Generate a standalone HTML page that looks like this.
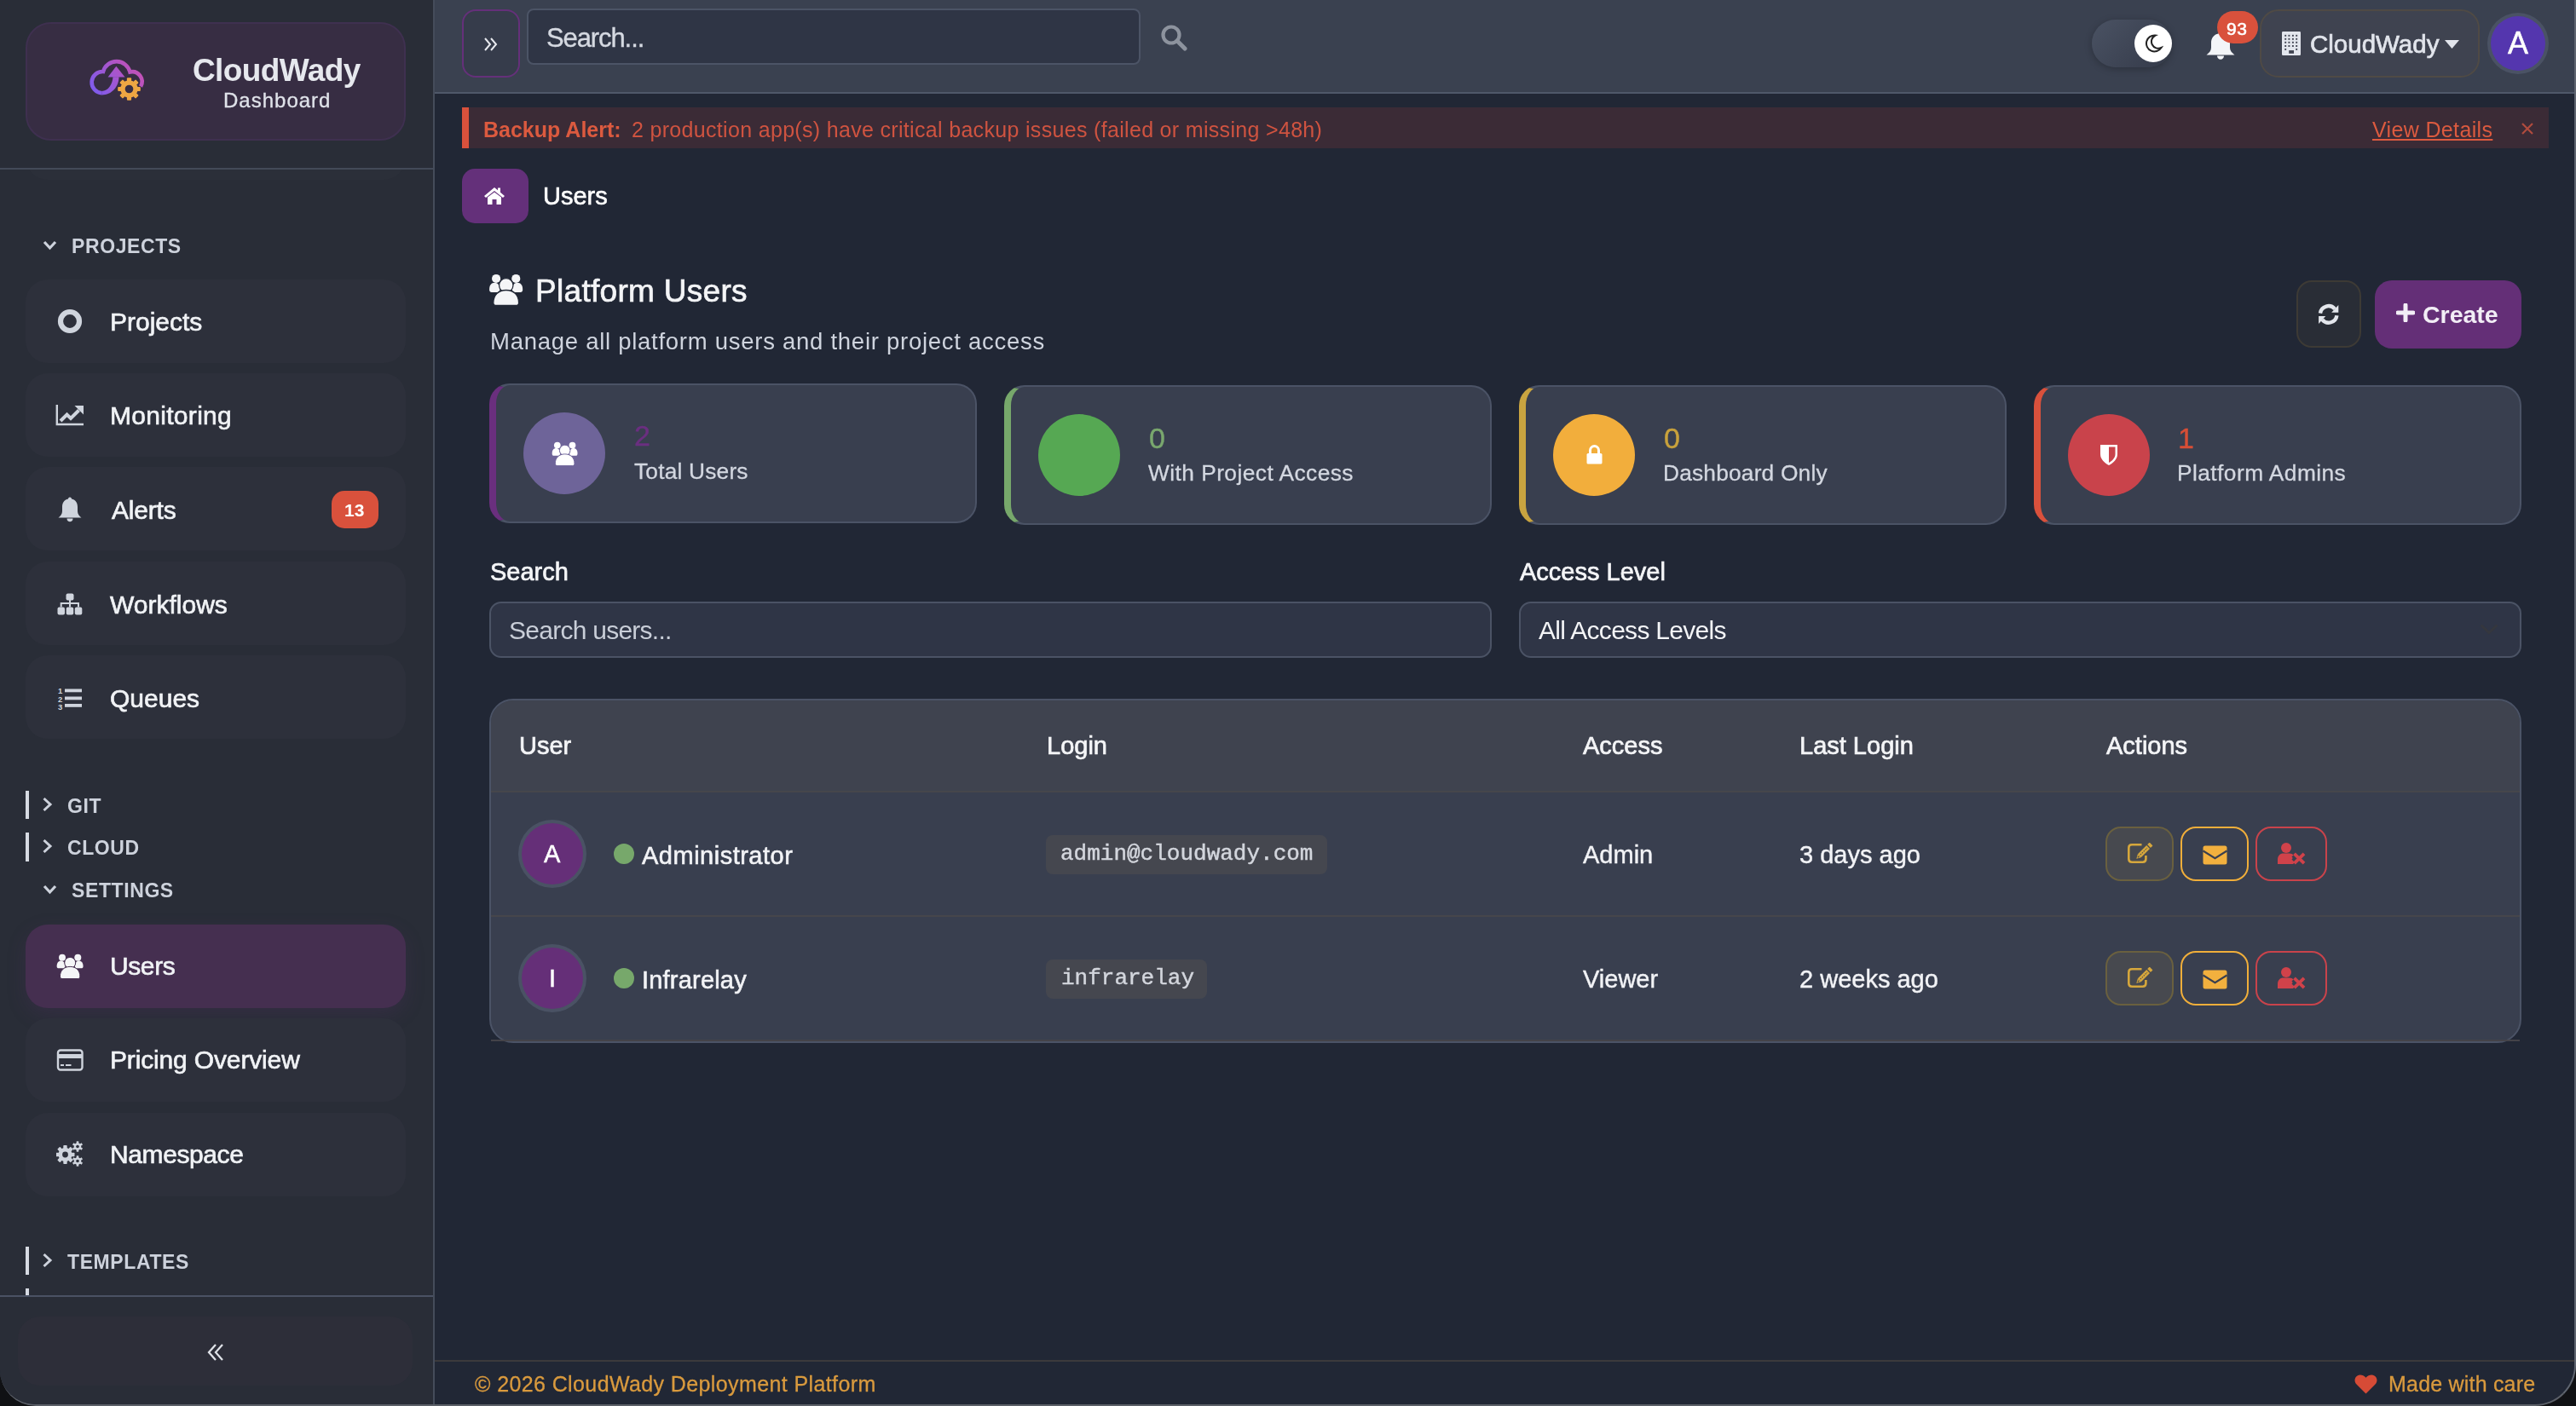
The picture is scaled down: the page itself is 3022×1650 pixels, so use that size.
<!DOCTYPE html>
<html><head><meta charset="utf-8"><title>CloudWady Users</title>
<style>
html,body{margin:0;padding:0;width:3022px;height:1650px;overflow:hidden;background:#101114;font-family:"Liberation Sans",sans-serif;}
.a{position:absolute;box-sizing:border-box;}
.t{position:absolute;white-space:nowrap;line-height:1;will-change:transform;}
.win{position:absolute;left:0;top:0;width:3022px;height:1650px;overflow:hidden;border-radius:0 0 48px 42px;background:#212735;border-right:2px solid #5f6570;border-bottom:2px solid #5c6068;box-sizing:border-box;}
.sb{left:0;top:0;width:510px;height:1649px;background:#292d37;border-right:2px solid #454c5a;}
.mi{position:absolute;left:30px;width:446px;height:98px;border-radius:26px;background:#2d303b;}
.mt{will-change:transform;position:absolute;left:129px;font-size:30px;color:#f1f3f6;line-height:1;white-space:nowrap;-webkit-text-stroke:0.65px #f1f3f6;}
.sec{will-change:transform;position:absolute;font-size:23px;font-weight:bold;letter-spacing:0.6px;color:#cdd2dc;line-height:1;white-space:nowrap;}
.ic{position:absolute;}
</style></head><body>
<div class="win">

<!-- ============ SIDEBAR ============ -->
<div class="a sb"></div>
<div class="mi" style="top:113px;background:#2b2f39"></div>
<div class="a" style="left:0;top:0;width:508px;height:198px;background:#292d37;"></div>
<!-- logo box -->
<div class="a" style="left:30px;top:26px;width:446px;height:139px;border-radius:30px;background:#372d43;border:2px solid #3f3050;"></div>
<svg class="ic" style="left:95px;top:55px" width="90" height="70" viewBox="0 0 90 70">
 <defs><linearGradient id="lg" gradientUnits="userSpaceOnUse" x1="14" y1="58" x2="68" y2="16"><stop offset="0" stop-color="#7a5cf0"/><stop offset="1" stop-color="#cc50b0"/></linearGradient></defs>
 <path d="M70 46.5 A11.5 11.5 0 0 0 57.5 29.5 A16.3 16.3 0 0 0 26 29 A12.6 12.6 0 1 0 24.5 54.2" fill="none" stroke="url(#lg)" stroke-width="4.6" stroke-linecap="butt"/>
 <path d="M24.3 56.5 C36 56.5 44.5 47 44.5 35.3 L37.5 35.3 C37 44 32 51.9 24.3 51.9 Z" fill="url(#lg)"/>
 <path d="M41.3 22.8 L31.6 35.6 L51.6 35.6 Z" fill="url(#lg)"/>
 <g transform="translate(56.5 49.5)" fill="#eea643">
  <circle r="10.2"/>
  <rect x="-2.6" y="-13.3" width="5.2" height="6" rx="1"/>
  <rect x="-2.6" y="-13.3" width="5.2" height="6" rx="1" transform="rotate(45)"/>
  <rect x="-2.6" y="-13.3" width="5.2" height="6" rx="1" transform="rotate(90)"/>
  <rect x="-2.6" y="-13.3" width="5.2" height="6" rx="1" transform="rotate(135)"/>
  <rect x="-2.6" y="-13.3" width="5.2" height="6" rx="1" transform="rotate(180)"/>
  <rect x="-2.6" y="-13.3" width="5.2" height="6" rx="1" transform="rotate(225)"/>
  <rect x="-2.6" y="-13.3" width="5.2" height="6" rx="1" transform="rotate(270)"/>
  <rect x="-2.6" y="-13.3" width="5.2" height="6" rx="1" transform="rotate(315)"/>
  <circle r="4.8" fill="#372d43"/>
 </g>
</svg>
<div class="t" style="left:226px;top:64px;font-size:37px;font-weight:bold;letter-spacing:-0.6px;color:#e6e8ee;">CloudWady</div>
<div class="t" style="left:262px;top:106px;font-size:24px;letter-spacing:1px;-webkit-text-stroke:0.3px #e0e3ea;color:#e0e3ea;">Dashboard</div>
<div class="a" style="left:0;top:197px;width:508px;height:2px;background:#434a58;"></div>

<!-- PROJECTS section -->
<svg class="ic" style="left:50px;top:282px" width="17" height="12" viewBox="0 0 17 12"><path d="M2 2 L8.5 9 L15 2" fill="none" stroke="#cdd2dc" stroke-width="3.2"/></svg>
<div class="sec" style="left:84px;top:278px;">PROJECTS</div>

<div class="mi" style="top:328px"></div>
<svg class="ic" style="left:66px;top:361px" width="32" height="32" viewBox="0 0 32 32"><circle cx="16" cy="16" r="11" fill="none" stroke="#cfd4dd" stroke-width="6.2"/></svg>
<div class="mt" style="top:363px">Projects</div>

<div class="mi" style="top:438px"></div>
<svg class="ic" style="left:65px;top:474px" width="34" height="26" viewBox="0 0 34 26"><path d="M1.8 1 V24 H33" fill="none" stroke="#cfd4dd" stroke-width="2.4"/><path d="M6 20 L13.5 12.5 L18 17 L27.5 7.5" fill="none" stroke="#cfd4dd" stroke-width="4"/><path d="M22.5 2 H33 V12.5 Z" fill="#cfd4dd"/></svg>
<div class="mt" style="top:473px;letter-spacing:0.3px">Monitoring</div>

<div class="mi" style="top:548px"></div>
<svg class="ic" style="left:68px;top:583px" width="28" height="30" viewBox="0 0 28 30"><path d="M14 0.5 C15.3 0.5 16 1.5 16 2.6 C21 3.6 23 7.5 23 12 V17 C23 20 25 22.5 27.5 24.5 H0.5 C3 22.5 5 20 5 17 V12 C5 7.5 7 3.6 12 2.6 C12 1.5 12.7 0.5 14 0.5 Z" fill="#cfd4dd"/><path d="M10.5 25.5 C10.5 28 12 29.3 14 29.3 C16 29.3 17.5 28 17.5 25.5 Z" fill="#cfd4dd"/></svg>
<div class="mt" style="top:584px;left:131px;letter-spacing:-0.2px">Alerts</div>
<div class="a" style="left:389px;top:576px;width:55px;height:44px;border-radius:15px;background:#d9513c;"></div>
<div class="t" style="left:404px;top:588px;font-size:21px;font-weight:bold;color:#fff;">13</div>

<div class="mi" style="top:659px"></div>
<svg class="ic" style="left:67px;top:696px" width="30" height="26" viewBox="0 0 30 26"><rect x="10.5" y="0.5" width="9" height="8" rx="2" fill="#cfd4dd"/><rect x="0.5" y="16.5" width="8.5" height="9" rx="2" fill="#cfd4dd"/><rect x="10.7" y="16.5" width="8.5" height="9" rx="2" fill="#cfd4dd"/><rect x="20.8" y="16.5" width="8.5" height="9" rx="2" fill="#cfd4dd"/><path d="M15 8 V16.5 M4.7 16.5 V12 H25 V16.5" fill="none" stroke="#cfd4dd" stroke-width="2"/></svg>
<div class="mt" style="top:695px">Workflows</div>

<div class="mi" style="top:769px"></div>
<svg class="ic" style="left:67px;top:804px" width="30" height="30" viewBox="0 0 30 30"><text x="1" y="10" font-family="Liberation Sans" font-weight="bold" font-size="9.5" fill="#cfd4dd">1</text><text x="1" y="19.5" font-family="Liberation Sans" font-weight="bold" font-size="9.5" fill="#cfd4dd">2</text><text x="1" y="29" font-family="Liberation Sans" font-weight="bold" font-size="9.5" fill="#cfd4dd">3</text><rect x="9" y="4.5" width="20" height="3.8" fill="#cfd4dd"/><rect x="9" y="13.5" width="20" height="3.8" fill="#cfd4dd"/><rect x="9" y="22" width="20" height="3.8" fill="#cfd4dd"/></svg>
<div class="mt" style="top:805px">Queues</div>

<!-- GIT / CLOUD -->
<div class="a" style="left:30px;top:928px;width:4px;height:33px;background:#d6dae2;"></div>
<svg class="ic" style="left:49px;top:935px" width="13" height="18" viewBox="0 0 13 18"><path d="M2.5 2 L10 9 L2.5 16" fill="none" stroke="#cdd2dc" stroke-width="3"/></svg>
<div class="sec" style="left:79px;top:935px;">GIT</div>
<div class="a" style="left:30px;top:977px;width:4px;height:34px;background:#d6dae2;"></div>
<svg class="ic" style="left:49px;top:984px" width="13" height="18" viewBox="0 0 13 18"><path d="M2.5 2 L10 9 L2.5 16" fill="none" stroke="#cdd2dc" stroke-width="3"/></svg>
<div class="sec" style="left:79px;top:984px;">CLOUD</div>

<!-- SETTINGS -->
<svg class="ic" style="left:50px;top:1038px" width="17" height="12" viewBox="0 0 17 12"><path d="M2 2 L8.5 9 L15 2" fill="none" stroke="#cdd2dc" stroke-width="3.2"/></svg>
<div class="sec" style="left:84px;top:1034px;">SETTINGS</div>

<div class="mi" style="top:1085px;background:#452f50;box-shadow:0 8px 22px rgba(90,50,110,0.22);"></div>
<svg class="ic" style="left:66px;top:1119px" width="32" height="30" viewBox="0 0 32 30"><g fill="#f4f5f7"><circle cx="7" cy="4.7" r="4"/><circle cx="25.3" cy="4.7" r="4"/><path d="M0.7 14.2 C0.7 10.6 2.8 8.4 5.5 8.4 C8.2 8.4 10.3 10.6 10.3 14.2 V15.2 C10.3 16.5 9.5 17.3 8.2 17.3 H2.8 C1.5 17.3 0.7 16.5 0.7 15.2 Z"/><path d="M21.9 14.2 C21.9 10.6 24 8.4 26.7 8.4 C29.4 8.4 31.5 10.6 31.5 14.2 V15.2 C31.5 16.5 30.7 17.3 29.4 17.3 H24 C22.7 17.3 21.9 16.5 21.9 15.2 Z"/></g><g fill="#f4f5f7" stroke="#452f50" stroke-width="1"><circle cx="16.2" cy="10.9" r="6.5"/><path d="M4.4 27 C4.4 20 9 15.4 16.2 15.4 C23.4 15.4 27.9 20 27.9 27 C27.9 28.6 26.8 29.6 25.2 29.6 H7.1 C5.5 29.6 4.4 28.6 4.4 27 Z"/></g></svg>
<div class="mt" style="top:1119px;letter-spacing:-0.4px">Users</div>

<div class="mi" style="top:1195px"></div>
<svg class="ic" style="left:66px;top:1231px" width="32" height="26" viewBox="0 0 32 26"><rect x="2" y="1.5" width="28.5" height="23" rx="3" fill="none" stroke="#cfd4dd" stroke-width="2.4"/><rect x="2" y="6" width="28.5" height="5" fill="#cfd4dd"/><rect x="5" y="18" width="4" height="2" fill="#cfd4dd"/><rect x="11" y="18" width="6.5" height="2" fill="#cfd4dd"/></svg>
<div class="mt" style="top:1229px;letter-spacing:-0.15px">Pricing Overview</div>

<div class="mi" style="top:1306px"></div>
<svg class="ic" style="left:66px;top:1339px" width="32" height="30" viewBox="0 0 32 30" fill="#cfd4dd">
 <g transform="translate(10.5 16)"><circle r="8"/><g><rect x="-2.2" y="-11" width="4.4" height="5" rx="0.8"/><rect x="-2.2" y="-11" width="4.4" height="5" rx="0.8" transform="rotate(45)"/><rect x="-2.2" y="-11" width="4.4" height="5" rx="0.8" transform="rotate(90)"/><rect x="-2.2" y="-11" width="4.4" height="5" rx="0.8" transform="rotate(135)"/><rect x="-2.2" y="-11" width="4.4" height="5" rx="0.8" transform="rotate(180)"/><rect x="-2.2" y="-11" width="4.4" height="5" rx="0.8" transform="rotate(225)"/><rect x="-2.2" y="-11" width="4.4" height="5" rx="0.8" transform="rotate(270)"/><rect x="-2.2" y="-11" width="4.4" height="5" rx="0.8" transform="rotate(315)"/></g><circle r="3.4" fill="#2d303b"/></g>
 <g transform="translate(25 6.5)"><circle r="4.2"/><rect x="-1.3" y="-6.2" width="2.6" height="12.4"/><rect x="-1.3" y="-6.2" width="2.6" height="12.4" transform="rotate(60)"/><rect x="-1.3" y="-6.2" width="2.6" height="12.4" transform="rotate(120)"/><circle r="1.8" fill="#2d303b"/></g>
 <g transform="translate(25 23.5)"><circle r="4.2"/><rect x="-1.3" y="-6.2" width="2.6" height="12.4"/><rect x="-1.3" y="-6.2" width="2.6" height="12.4" transform="rotate(60)"/><rect x="-1.3" y="-6.2" width="2.6" height="12.4" transform="rotate(120)"/><circle r="1.8" fill="#2d303b"/></g>
</svg>
<div class="mt" style="top:1340px;letter-spacing:-0.4px">Namespace</div>

<!-- TEMPLATES -->
<div class="a" style="left:30px;top:1463px;width:4px;height:33px;background:#d6dae2;"></div>
<svg class="ic" style="left:49px;top:1470px" width="13" height="18" viewBox="0 0 13 18"><path d="M2.5 2 L10 9 L2.5 16" fill="none" stroke="#cdd2dc" stroke-width="3"/></svg>
<div class="sec" style="left:79px;top:1470px;">TEMPLATES</div>
<div class="a" style="left:30px;top:1512px;width:4px;height:9px;background:#d6dae2;"></div>

<!-- bottom collapse -->
<div class="a" style="left:0;top:1520px;width:508px;height:2px;background:#4a5264;"></div>

<div class="a" style="left:21px;top:1545px;width:463px;height:81px;border-radius:26px;background:#2d2e39;"></div>
<svg class="ic" style="left:242px;top:1576px" width="22" height="22" viewBox="0 0 22 22"><path d="M11 2 L3 11 L11 20 M19 2 L11 11 L19 20" fill="none" stroke="#dfe2e8" stroke-width="2.3"/></svg>

<!-- ============ TOPBAR ============ -->
<div class="a" style="left:510px;top:0;width:2512px;height:108px;background:#3a4150;"></div>
<div class="a" style="left:510px;top:108px;width:2512px;height:2px;background:#4f5869;"></div>
<div class="a" style="left:542px;top:11px;width:68px;height:80px;border-radius:16px;border:2px solid #65307a;background:#363c4b;"></div>
<svg class="ic" style="left:567px;top:43px" width="18" height="18" viewBox="0 0 18 18"><path d="M2 2 L8 9 L2 16 M9 2 L15 9 L9 16" fill="none" stroke="#e8eaef" stroke-width="2"/></svg>
<div class="a" style="left:618px;top:10px;width:720px;height:66px;border-radius:8px;border:2px solid #4c5466;background:#2f3545;"></div>
<div class="t" style="left:641px;top:29px;font-size:31px;letter-spacing:-1.1px;color:#d5d9e1;-webkit-text-stroke:0.35px #d5d9e1;">Search...</div>
<svg class="ic" style="left:1361px;top:28px" width="34" height="32" viewBox="0 0 34 32"><circle cx="13" cy="13" r="9.5" fill="none" stroke="#8d939e" stroke-width="4.2"/><path d="M20 20 L29 29" stroke="#8d939e" stroke-width="5" stroke-linecap="round"/></svg>

<!-- theme toggle -->
<div class="a" style="left:2454px;top:23px;width:94px;height:56px;border-radius:28px;background:linear-gradient(135deg,#4a5263,#343a49);box-shadow:0 2px 8px rgba(0,0,0,0.25);"></div>
<div class="a" style="left:2504px;top:28.5px;width:44px;height:44px;border-radius:22px;background:#fff;"></div>
<svg class="ic" style="left:2514px;top:39px" width="24" height="24" viewBox="0 0 24 24"><path d="M14.5 2.5 A9.5 9.5 0 1 0 21.5 17 A8 8 0 0 1 14.5 2.5 Z" fill="none" stroke="#222" stroke-width="2"/></svg>
<!-- bell -->
<svg class="ic" style="left:2588px;top:35px" width="36" height="36" viewBox="0 0 36 36"><path d="M17 2 C18.5 2 19.5 3.2 19.5 4.5 C25 5.5 28 10 28 15 V21 C28 24.5 30.5 27 33.5 29.5 H0.5 C3.5 27 6 24.5 6 21 V15 C6 10 9 5.5 14.5 4.5 C14.5 3.2 15.5 2 17 2 Z" fill="#f3f5f8"/><path d="M13 30.5 C13 33 14.8 34.8 17 34.8 C19.2 34.8 21 33 21 30.5 Z" fill="#f3f5f8"/></svg>
<div class="a" style="left:2601px;top:12.5px;width:48px;height:38.5px;border-radius:19px;background:#d9513c;"></div>
<div class="t" style="left:2612px;top:23px;font-size:21px;letter-spacing:0.6px;-webkit-text-stroke:0.6px #fff;color:#fff;">93</div>
<!-- org -->
<div class="a" style="left:2651px;top:11px;width:258px;height:80px;border-radius:22px;border:2px solid #4f4a45;background:#3f4350;"></div>
<svg class="ic" style="left:2677px;top:37px" width="22" height="28" viewBox="0 0 22 28"><rect x="0" y="0" width="22" height="28" rx="1.2" fill="#e3e6ed"/><g fill="#3f4350"><rect x="3.25" y="3.85" width="1.9" height="1.9"/><rect x="3.25" y="7.85" width="1.9" height="1.9"/><rect x="3.25" y="11.85" width="1.9" height="1.9"/><rect x="3.25" y="16.05" width="1.9" height="1.9"/><rect x="7.45" y="3.85" width="1.9" height="1.9"/><rect x="7.45" y="7.85" width="1.9" height="1.9"/><rect x="7.45" y="11.85" width="1.9" height="1.9"/><rect x="7.45" y="16.05" width="1.9" height="1.9"/><rect x="11.95" y="3.85" width="1.9" height="1.9"/><rect x="11.95" y="7.85" width="1.9" height="1.9"/><rect x="11.95" y="11.85" width="1.9" height="1.9"/><rect x="11.95" y="16.05" width="1.9" height="1.9"/><rect x="16.25" y="3.85" width="1.9" height="1.9"/><rect x="16.25" y="7.85" width="1.9" height="1.9"/><rect x="16.25" y="11.85" width="1.9" height="1.9"/><rect x="16.25" y="16.05" width="1.9" height="1.9"/><rect x="3.25" y="19.95" width="1.9" height="1.9"/><rect x="16.25" y="19.95" width="1.9" height="1.9"/><rect x="8.2" y="22.1" width="5.8" height="3.7"/></g></svg>
<div class="t" style="left:2710px;top:37px;font-size:29.5px;color:#e2e5ec;-webkit-text-stroke:0.7px #e2e5ec;">CloudWady</div>
<svg class="ic" style="left:2868px;top:47px" width="17" height="11" viewBox="0 0 17 11"><path d="M0 0 H17 L8.5 10 Z" fill="#e2e5ec"/></svg>
<!-- avatar -->
<div class="a" style="left:2918px;top:15px;width:72px;height:72px;border-radius:36px;background:#4a5264;"></div>
<div class="a" style="left:2922px;top:19px;width:64px;height:64px;border-radius:32px;background:#5436ae;"></div>
<div class="t" style="left:2942px;top:33px;font-size:36px;color:#fff;-webkit-text-stroke:0.5px #fff;">A</div>

<!-- ============ ALERT ============ -->
<div class="a" style="left:542px;top:126px;width:2448px;height:48px;background:#3b2b36;"></div>
<div class="a" style="left:542px;top:126px;width:8px;height:48px;background:#d9513c;"></div>
<div class="t" style="left:567px;top:140px;font-size:25px;font-weight:bold;color:#dc5a3f;">Backup Alert:</div>
<div class="t" style="left:741px;top:140px;font-size:25px;letter-spacing:0.32px;color:#cf5340;">2 production app(s) have critical backup issues (failed or missing &gt;48h)</div>
<div class="t" style="left:2783px;top:140px;font-size:25px;letter-spacing:0.35px;color:#dc5a3f;text-decoration:underline;">View Details</div>
<svg class="ic" style="left:2957px;top:143px" width="16" height="16" viewBox="0 0 16 16"><path d="M2 2 L14 14 M14 2 L2 14" stroke="#b04b3e" stroke-width="2.2"/></svg>

<!-- breadcrumb -->
<div class="a" style="left:542px;top:198px;width:78px;height:64px;border-radius:15px;background:#64307a;"></div>
<svg class="ic" style="left:567px;top:219px" width="26" height="22" viewBox="0 0 26 22"><path d="M13 1 L1 11 L3 13 L13 5 L23 13 L25 11 L20 6.8 V1.5 H17 V4.2 Z" fill="#fff"/><path d="M5 12.5 L13 6.5 L21 12.5 V21 H15.5 V15 H10.5 V21 H5 Z" fill="#fff"/></svg>
<div class="t" style="left:637px;top:216px;font-size:29px;color:#fff;-webkit-text-stroke:0.6px #fff;">Users</div>

<!-- ============ PAGE HEADER ============ -->
<svg class="ic" style="left:573px;top:321px" width="41" height="38" viewBox="0 0 32 30"><g fill="#f4f5f7"><circle cx="7" cy="4.7" r="4"/><circle cx="25.3" cy="4.7" r="4"/><path d="M0.7 14.2 C0.7 10.6 2.8 8.4 5.5 8.4 C8.2 8.4 10.3 10.6 10.3 14.2 V15.2 C10.3 16.5 9.5 17.3 8.2 17.3 H2.8 C1.5 17.3 0.7 16.5 0.7 15.2 Z"/><path d="M21.9 14.2 C21.9 10.6 24 8.4 26.7 8.4 C29.4 8.4 31.5 10.6 31.5 14.2 V15.2 C31.5 16.5 30.7 17.3 29.4 17.3 H24 C22.7 17.3 21.9 16.5 21.9 15.2 Z"/></g><g fill="#f4f5f7" stroke="#212735" stroke-width="1"><circle cx="16.2" cy="10.9" r="6.5"/><path d="M4.4 27 C4.4 20 9 15.4 16.2 15.4 C23.4 15.4 27.9 20 27.9 27 C27.9 28.6 26.8 29.6 25.2 29.6 H7.1 C5.5 29.6 4.4 28.6 4.4 27 Z"/></g></svg>
<div class="t" style="left:628px;top:323px;font-size:37px;letter-spacing:0.3px;color:#f4f5f7;-webkit-text-stroke:0.7px #f4f5f7;">Platform Users</div>
<div class="t" style="left:575px;top:387px;font-size:27.5px;letter-spacing:0.73px;color:#cfd4de;">Manage all platform users and their project access</div>

<div class="a" style="left:2694px;top:329px;width:76px;height:79px;border-radius:18px;background:#292d36;border:2px solid #3d3a35;"></div>
<svg class="ic" style="left:2717px;top:354px" width="29" height="29" viewBox="0 0 29 29"><path d="M5 13.6 A9.7 9.7 0 0 1 22.1 8.7" fill="none" stroke="#e3e6ec" stroke-width="4.4"/><path d="M26.3 3.9 V12.7 H18.1 Z" fill="#e3e6ec"/><path d="M24.4 16.2 A9.7 9.7 0 0 1 7.3 21.1" fill="none" stroke="#e3e6ec" stroke-width="4.4"/><path d="M3.1 25.9 V17.1 H11.3 Z" fill="#e3e6ec"/></svg>
<div class="a" style="left:2786px;top:329px;width:172px;height:80px;border-radius:20px;background:#642f77;"></div>
<svg class="ic" style="left:2811px;top:356px" width="22" height="22" viewBox="0 0 22 22"><path d="M11 2 V20 M2 11 H20" stroke="#f2eef6" stroke-width="5" stroke-linecap="round"/></svg>
<div class="t" style="left:2842px;top:355px;font-size:28.5px;font-weight:bold;color:#f2eef6;">Create</div>

<!-- ============ STAT CARDS ============ -->
<!-- card1 -->
<div class="a" style="left:574px;top:450px;width:572px;height:164px;border-radius:24px;background:#393f4f;border:2px solid #4b5366;border-left:8px solid #6a2f7e;"></div>
<div class="a" style="left:614px;top:484px;width:96px;height:96px;border-radius:48px;background:#6e6499;"></div>
<svg class="ic" style="left:647px;top:518px" width="31" height="29" viewBox="0 0 32 30"><g fill="#fff"><circle cx="7" cy="4.7" r="4"/><circle cx="25.3" cy="4.7" r="4"/><path d="M0.7 14.2 C0.7 10.6 2.8 8.4 5.5 8.4 C8.2 8.4 10.3 10.6 10.3 14.2 V15.2 C10.3 16.5 9.5 17.3 8.2 17.3 H2.8 C1.5 17.3 0.7 16.5 0.7 15.2 Z"/><path d="M21.9 14.2 C21.9 10.6 24 8.4 26.7 8.4 C29.4 8.4 31.5 10.6 31.5 14.2 V15.2 C31.5 16.5 30.7 17.3 29.4 17.3 H24 C22.7 17.3 21.9 16.5 21.9 15.2 Z"/></g><g fill="#fff" stroke="#6e6499" stroke-width="1"><circle cx="16.2" cy="10.9" r="6.5"/><path d="M4.4 27 C4.4 20 9 15.4 16.2 15.4 C23.4 15.4 27.9 20 27.9 27 C27.9 28.6 26.8 29.6 25.2 29.6 H7.1 C5.5 29.6 4.4 28.6 4.4 27 Z"/></g></svg>
<div class="t" style="left:744px;top:494px;font-size:34px;color:#6b2f80;-webkit-text-stroke:0.4px #6b2f80;">2</div>
<div class="t" style="left:744px;top:540px;font-size:26.3px;letter-spacing:0.2px;color:#d3d7e0;-webkit-text-stroke:0.3px #d3d7e0;">Total Users</div>
<!-- card2 -->
<div class="a" style="left:1178px;top:452px;width:572px;height:164px;border-radius:24px;background:#393f4f;border:2px solid #4b5366;border-left:8px solid #77a86b;"></div>
<div class="a" style="left:1218px;top:486px;width:96px;height:96px;border-radius:48px;background:#56a853;"></div>
<div class="t" style="left:1348px;top:497px;font-size:34px;color:#7aa86e;-webkit-text-stroke:0.4px #7aa86e;">0</div>
<div class="t" style="left:1347px;top:542px;font-size:26.3px;letter-spacing:0.45px;color:#d3d7e0;-webkit-text-stroke:0.3px #d3d7e0;">With Project Access</div>
<!-- card3 -->
<div class="a" style="left:1782px;top:452px;width:572px;height:164px;border-radius:24px;background:#393f4f;border:2px solid #4b5366;border-left:8px solid #c9a440;"></div>
<div class="a" style="left:1822px;top:486px;width:96px;height:96px;border-radius:48px;background:#f2ae3c;"></div>
<svg class="ic" style="left:1860.7px;top:522px" width="19" height="23" viewBox="0 0 19 23"><path d="M4.5 10 V6.5 A5 5 0 0 1 14.5 6.5 V10" fill="none" stroke="#fff" stroke-width="3"/><rect x="0.5" y="10" width="18" height="12.5" rx="1.5" fill="#fff"/></svg>
<div class="t" style="left:1952px;top:497px;font-size:34px;color:#c9a23c;-webkit-text-stroke:0.4px #c9a23c;">0</div>
<div class="t" style="left:1951px;top:542px;font-size:26.3px;letter-spacing:0.2px;color:#d3d7e0;-webkit-text-stroke:0.3px #d3d7e0;">Dashboard Only</div>
<!-- card4 -->
<div class="a" style="left:2386px;top:452px;width:572px;height:164px;border-radius:24px;background:#393f4f;border:2px solid #4b5366;border-left:8px solid #d9513c;"></div>
<div class="a" style="left:2426px;top:486px;width:96px;height:96px;border-radius:48px;background:#c9434b;"></div>
<svg class="ic" style="left:2463px;top:521px" width="22" height="26" viewBox="0 0 22 26"><path d="M1 1 H21 V12 C21 18 16 22.5 11 25 C6 22.5 1 18 1 12 Z" fill="#fff"/><path d="M11 3.5 V22 C14.5 20 18.5 16.5 18.5 12 V3.5 Z" fill="#c9434b"/></svg>
<div class="t" style="left:2555px;top:497px;font-size:34px;color:#d84e36;-webkit-text-stroke:0.4px #d84e36;">1</div>
<div class="t" style="left:2554px;top:542px;font-size:26.3px;letter-spacing:0.45px;color:#d3d7e0;-webkit-text-stroke:0.3px #d3d7e0;">Platform Admins</div>

<!-- ============ FILTERS ============ -->
<div class="t" style="left:575px;top:657px;font-size:29px;-webkit-text-stroke:0.7px #f4f5f7;color:#f4f5f7;">Search</div>
<div class="a" style="left:574px;top:706px;width:1175.5px;height:66px;border-radius:14px;background:#2f3546;border:2px solid #4b5365;"></div>
<div class="t" style="left:597px;top:725px;font-size:30px;letter-spacing:-0.74px;color:#c9ced8;">Search users...</div>
<div class="t" style="left:1783px;top:657px;font-size:29px;-webkit-text-stroke:0.7px #f4f5f7;color:#f4f5f7;">Access Level</div>
<div class="a" style="left:1782px;top:706px;width:1176px;height:66px;border-radius:14px;background:#2f3546;border:2px solid #4b5365;"></div>
<div class="t" style="left:1805px;top:725px;font-size:30px;letter-spacing:-0.7px;color:#f4f5f7;">All Access Levels</div>
<svg class="ic" style="left:2909px;top:732px" width="22" height="14" viewBox="0 0 22 14"><path d="M2.5 2.5 L11 10.5 L19.5 2.5" fill="none" stroke="#35373e" stroke-width="3" stroke-linecap="round"/></svg>

<!-- ============ TABLE ============ -->
<div class="a" style="left:574px;top:820px;width:2384px;height:404px;border-radius:28px;background:#393f4f;border:2px solid #4b5366;overflow:hidden;">
  <div class="a" style="left:0;top:0;width:2384px;height:106px;background:#3f434f;"></div>
  <div class="a" style="left:0;top:106px;width:2384px;height:2px;background:#46464b;"></div>
  <div class="a" style="left:0;top:252px;width:2384px;height:2px;background:#46464b;"></div>
</div>
<div class="a" style="left:576px;top:1220px;width:2380px;height:2px;background:#444349;"></div>
<div class="t" style="left:609px;top:861px;font-size:29px;-webkit-text-stroke:0.7px #f4f5f7;color:#f4f5f7;">User</div>
<div class="t" style="left:1228px;top:861px;font-size:29px;-webkit-text-stroke:0.7px #f4f5f7;color:#f4f5f7;">Login</div>
<div class="t" style="left:1857px;top:861px;font-size:29px;-webkit-text-stroke:0.7px #f4f5f7;color:#f4f5f7;">Access</div>
<div class="t" style="left:2111px;top:861px;font-size:29px;-webkit-text-stroke:0.7px #f4f5f7;color:#f4f5f7;">Last Login</div>
<div class="t" style="left:2471px;top:861px;font-size:29px;-webkit-text-stroke:0.7px #f4f5f7;color:#f4f5f7;">Actions</div>

<!-- row1 -->
<div class="a" style="left:608px;top:962px;width:80px;height:80px;border-radius:40px;background:#4a5264;"></div>
<div class="a" style="left:612px;top:966px;width:72px;height:72px;border-radius:36px;background:#652f78;"></div>
<div class="t" style="left:638px;top:988px;font-size:29px;color:#fff;-webkit-text-stroke:0.5px #fff;">A</div>
<div class="a" style="left:720px;top:990px;width:24px;height:24px;border-radius:12px;background:#77a86b;"></div>
<div class="t" style="left:753px;top:990px;font-size:29px;letter-spacing:0.5px;-webkit-text-stroke:0.6px #f2f3f6;color:#f2f3f6;">Administrator</div>
<div class="a" style="left:1227px;top:980px;width:330px;height:46px;border-radius:8px;background:#45474f;"></div>
<div class="t" style="left:1244px;top:989px;font-size:26px;font-family:'Liberation Mono',monospace;color:#d3d6dd;-webkit-text-stroke:0.45px #d3d6dd;">admin@cloudwady.com</div>
<div class="t" style="left:1857px;top:989px;font-size:29px;color:#f2f3f6;-webkit-text-stroke:0.4px #f2f3f6;">Admin</div>
<div class="t" style="left:2111px;top:989px;font-size:29px;color:#f2f3f6;-webkit-text-stroke:0.4px #f2f3f6;">3 days ago</div>

<!-- row2 -->
<div class="a" style="left:608px;top:1108px;width:80px;height:80px;border-radius:40px;background:#4a5264;"></div>
<div class="a" style="left:612px;top:1112px;width:72px;height:72px;border-radius:36px;background:#652f78;"></div>
<div class="t" style="left:644px;top:1134px;font-size:29px;color:#fff;-webkit-text-stroke:0.5px #fff;">I</div>
<div class="a" style="left:720px;top:1136px;width:24px;height:24px;border-radius:12px;background:#77a86b;"></div>
<div class="t" style="left:753px;top:1136px;font-size:29px;letter-spacing:0.2px;-webkit-text-stroke:0.6px #f2f3f6;color:#f2f3f6;">Infrarelay</div>
<div class="a" style="left:1227px;top:1126px;width:189px;height:46px;border-radius:8px;background:#45474f;"></div>
<div class="t" style="left:1245px;top:1135px;font-size:26px;font-family:'Liberation Mono',monospace;color:#d3d6dd;-webkit-text-stroke:0.45px #d3d6dd;">infrarelay</div>
<div class="t" style="left:1857px;top:1135px;font-size:29px;color:#f2f3f6;-webkit-text-stroke:0.4px #f2f3f6;">Viewer</div>
<div class="t" style="left:2111px;top:1135px;font-size:29px;color:#f2f3f6;-webkit-text-stroke:0.4px #f2f3f6;">2 weeks ago</div>

<!-- action buttons -->
<div class="a" style="left:2470px;top:970px;width:80px;height:64px;border-radius:18px;background:#47494f;border:2px solid #6a603f;"></div>
<svg class="ic" style="left:2496px;top:989px" width="30" height="25" viewBox="0 0 30 25"><path d="M16.5 2.3 H5 C2.8 2.3 1.3 3.8 1.3 6 V19 C1.3 21.2 2.8 22.7 5 22.7 H17.7 C19.9 22.7 21.4 21.2 21.4 19 V15" fill="none" stroke="#d6a73c" stroke-width="2.6"/><g transform="translate(10.3 18.8) rotate(-45)" fill="#d6a73c"><path d="M0 0 L5 -2.7 V2.7 Z"/><rect x="5" y="-2.7" width="14.5" height="5.4"/><rect x="20.8" y="-2.7" width="3.6" height="5.4" rx="0.6"/><path d="M6.5 0 H18" stroke="#47494f" stroke-width="1" stroke-dasharray="1.5 1.2"/><path d="M2.2 0 H4.5" stroke="#47494f" stroke-width="1.2"/></g></svg>
<div class="a" style="left:2558px;top:970px;width:80px;height:64px;border-radius:18px;background:#393f4f;border:2.5px solid #f0ae3a;"></div>
<svg class="ic" style="left:2584px;top:991.5px" width="29" height="23" viewBox="0 0 29 23"><rect x="0.5" y="0.5" width="28" height="22" rx="2.5" fill="#f2b03e"/><path d="M0.5 6.5 L14.5 15.2 L28.5 6.5" fill="none" stroke="#393f4f" stroke-width="2.1"/></svg>
<div class="a" style="left:2646px;top:970px;width:84px;height:64px;border-radius:18px;background:#393f4f;border:2.5px solid #c9434b;"></div>
<svg class="ic" style="left:2671px;top:989px" width="34" height="26" viewBox="0 0 34 26"><circle cx="11" cy="6" r="6" fill="#d0424a"/><path d="M1 25 V20 C1 15 4 12.5 7.5 12.5 H14.5 C17 12.5 18.5 13.3 19.5 14.5 L17.5 16.5 L18.8 18 L17.5 19.5 L21 23 L19 25 Z" fill="#d0424a"/><path d="M20.5 12.8 L32 24.2 M32 12.8 L20.5 24.2" stroke="#d0424a" stroke-width="3.8"/></svg>
<div class="a" style="left:2470px;top:1116px;width:80px;height:64px;border-radius:18px;background:#47494f;border:2px solid #6a603f;"></div>
<svg class="ic" style="left:2496px;top:1135px" width="30" height="25" viewBox="0 0 30 25"><path d="M16.5 2.3 H5 C2.8 2.3 1.3 3.8 1.3 6 V19 C1.3 21.2 2.8 22.7 5 22.7 H17.7 C19.9 22.7 21.4 21.2 21.4 19 V15" fill="none" stroke="#d6a73c" stroke-width="2.6"/><g transform="translate(10.3 18.8) rotate(-45)" fill="#d6a73c"><path d="M0 0 L5 -2.7 V2.7 Z"/><rect x="5" y="-2.7" width="14.5" height="5.4"/><rect x="20.8" y="-2.7" width="3.6" height="5.4" rx="0.6"/><path d="M6.5 0 H18" stroke="#47494f" stroke-width="1" stroke-dasharray="1.5 1.2"/><path d="M2.2 0 H4.5" stroke="#47494f" stroke-width="1.2"/></g></svg>
<div class="a" style="left:2558px;top:1116px;width:80px;height:64px;border-radius:18px;background:#393f4f;border:2.5px solid #f0ae3a;"></div>
<svg class="ic" style="left:2584px;top:1137.5px" width="29" height="23" viewBox="0 0 29 23"><rect x="0.5" y="0.5" width="28" height="22" rx="2.5" fill="#f2b03e"/><path d="M0.5 6.5 L14.5 15.2 L28.5 6.5" fill="none" stroke="#393f4f" stroke-width="2.1"/></svg>
<div class="a" style="left:2646px;top:1116px;width:84px;height:64px;border-radius:18px;background:#393f4f;border:2.5px solid #c9434b;"></div>
<svg class="ic" style="left:2671px;top:1135px" width="34" height="26" viewBox="0 0 34 26"><circle cx="11" cy="6" r="6" fill="#d0424a"/><path d="M1 25 V20 C1 15 4 12.5 7.5 12.5 H14.5 C17 12.5 18.5 13.3 19.5 14.5 L17.5 16.5 L18.8 18 L17.5 19.5 L21 23 L19 25 Z" fill="#d0424a"/><path d="M20.5 12.8 L32 24.2 M32 12.8 L20.5 24.2" stroke="#d0424a" stroke-width="3.8"/></svg>


<!-- ============ FOOTER ============ -->
<div class="a" style="left:510px;top:1596px;width:2512px;height:2px;background:#3b3a3c;"></div>
<div class="t" style="left:557px;top:1612px;font-size:25px;letter-spacing:0.39px;color:#d99a3e;-webkit-text-stroke:0.3px #d99a3e;">© 2026 CloudWady Deployment Platform</div>
<svg class="ic" style="left:2762px;top:1613px" width="27" height="23" viewBox="0 0 27 23"><path d="M13.5 22.5 L2.5 11.5 C-0.5 8.5 0 3.5 3.5 1.5 C6.5 -0.3 10.5 0.5 13.5 3.8 C16.5 0.5 20.5 -0.3 23.5 1.5 C27 3.5 27.5 8.5 24.5 11.5 Z" fill="#d64b36"/></svg>
<div class="t" style="left:2802px;top:1612px;font-size:25px;letter-spacing:0.2px;color:#d99a3e;-webkit-text-stroke:0.3px #d99a3e;">Made with care</div>

</div>
<!-- window edges -->

</body></html>
